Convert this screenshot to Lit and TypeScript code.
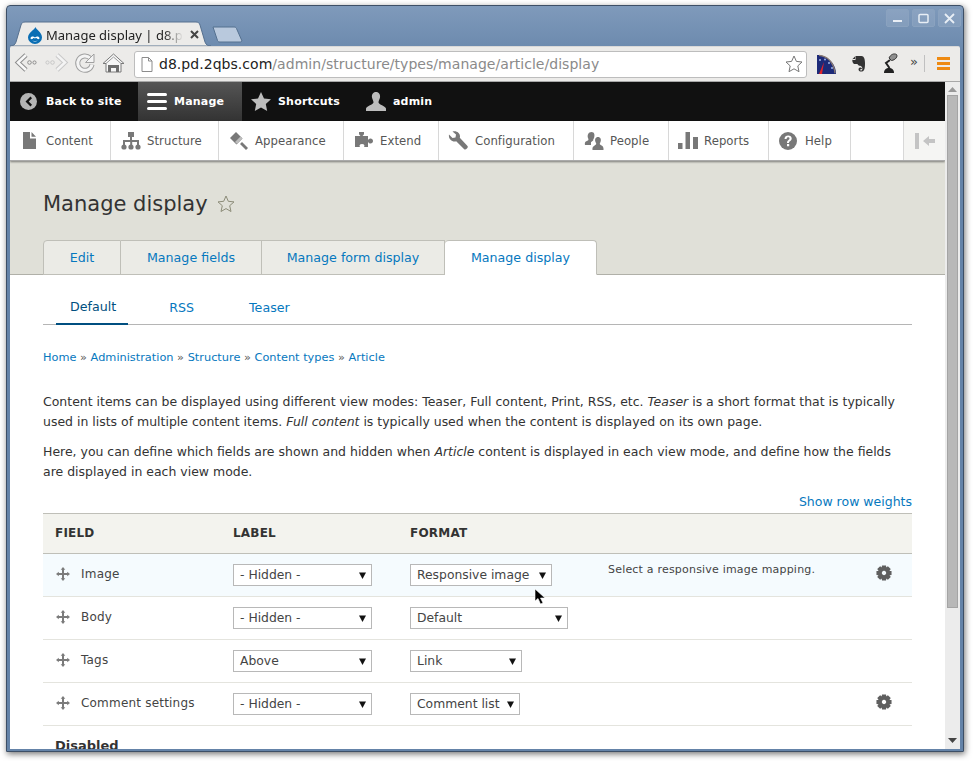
import { LitElement, html, css } from "lit";
import { customElement } from "lit/decorators.js";

const gearPath = (() => {
  const c = 8, teeth = 8, ro = 7.8, ri = 5.8;
  let d = "";
  for (let i = 0; i < teeth; i++) {
    const a = (i / teeth) * Math.PI * 2;
    const w = 0.26, s = 0.42;
    const pts = [[ri, a - s], [ro, a - w], [ro, a + w], [ri, a + s]];
    pts.forEach(([r, t], j) => {
      d += `${i === 0 && j === 0 ? "M" : "L"}${(c + r * Math.cos(t)).toFixed(2)} ${(c + r * Math.sin(t)).toFixed(2)}`;
    });
  }
  return d + "Z M8 5.800a2.200 2.200 0 1 0 .01 0Z";
})();

const gear = () => html`<svg class="gear" width="16" height="16" viewBox="0 0 16 16"><path d=${gearPath} fill="#5f5f5f" fill-rule="evenodd"/></svg>`;
const handle = () => html`<svg class="handle" width="14" height="14" viewBox="0 0 14 14"><path d="M7 0 9.300 2.800H8V6h3.200V4.700L14 7l-2.800 2.300V8H8v3.200h1.300L7 14l-2.300-2.800H6V8H2.800v1.300L0 7l2.800-2.300V6H6V2.800H4.700Z" fill="#7b7b7b"/></svg>`;

const trayIcons: Record<string, any> = {
  content: html`<svg width="15" height="19" viewBox="0 0 15 19"><path d="M1 1h7v6.500h6V18H1Z M9.500 1 14 5.800H9.500Z" fill="#787878"/></svg>`,
  structure: html`<svg width="20" height="20" viewBox="0 0 20 20"><path d="M7 1h6v5h-2v3h7v5h-2v-3h-4.800v3H9.200v-3H4v3H2V9h7V6H7Z" fill="#787878"/><circle cx="3" cy="16" r="2.600" fill="#787878"/><circle cx="10" cy="16" r="2.600" fill="#787878"/><circle cx="17" cy="16" r="2.600" fill="#787878"/></svg>`,
  appearance: html`<svg width="20" height="20" viewBox="0 0 20 20"><path d="M1 7 7 1l6.500 6.500-6 6Z" fill="#787878"/><path d="M6 11l5.500-5.500 2 2-5.500 5.500Z" fill="#bcbcbc"/><path d="M11 13l2-2 6 6-2 2Z" fill="#787878"/></svg>`,
  extend: html`<svg width="20" height="20" viewBox="0 0 20 20"><path d="M1 5h5.500c-1-1-1.500-1.500-1.500-2.500V1h5v1.500c0 1-.5 1.500-1.500 2.500H14v4c1-1 1.500-1.500 2.500-1.500 1.500 0 2.500 1 2.500 2.500s-1 2.500-2.500 2.500c-1 0-1.500-.5-2.500-1.500v5h-4c1-1 .5-3-2-3s-3 2-2 3H1Z" fill="#787878"/></svg>`,
  config: html`<svg width="20" height="20" viewBox="0 0 20 20"><path d="M1 3.500 4.500 7l3-.5.500-3L4.500.5C8-.8 12 1.500 12 5.300c0 .6 0 1-.2 1.400l7.700 8.300c1.300 1.500-1.800 4.500-3.300 3.200l-8-8C4 11.300.2 7.800 1 3.500Z" fill="#787878"/></svg>`,
  people: html`<svg width="20" height="20" viewBox="0 0 20 20"><path d="M7.500 1c3 0 3.500 3 2.500 6-.5 1.200-.8 1.500-.8 2.500-.5.500-1.500 1-2.200 1.800V14H1c-.5-3 .5-3.500 3-4.500.7-.5.5-1.500 0-2.500C3 4 4.500 1 7.500 1Z" fill="#787878"/><path d="M14 6c2.500 0 3.500 2.500 2.500 5-.5 1.200-1 1.500-.5 2.500 1 1 4 1 3.500 5.500H8.500c-.5-4 2.500-4.500 3.500-5.500.5-1 0-1.300-.5-2.500-1-2.500 0-5 2.500-5Z" fill="#787878"/></svg>`,
  reports: html`<svg width="20" height="20" viewBox="0 0 20 20"><path d="M0 12h4.500v6H0ZM7.500 1H12v17H7.500ZM15 6h5v12h-5Z" fill="#787878"/></svg>`,
  help: html`<svg width="18" height="18" viewBox="0 0 18 18"><circle cx="9" cy="9" r="9" fill="#787878"/><path d="M5.500 7c0-2.500 1.800-3.500 3.700-3.500 2 0 3.500 1.200 3.500 3 0 2.500-2.700 2.500-2.700 4.500H8c0-3 2.500-3 2.500-4.500 0-.7-.5-1.200-1.300-1.200-.9 0-1.500.5-1.600 1.700ZM8 12h2.200v2.300H8Z" fill="#fff"/></svg>`,
};

const tray = [
  { k: "content", t: "Content", w: 101, pl: 12, gap: 9 },
  { k: "structure", t: "Structure", w: 108, pl: 10, gap: 6 },
  { k: "appearance", t: "Appearance", w: 125, pl: 10, gap: 6 },
  { k: "extend", t: "Extend", w: 95, pl: 10, gap: 6 },
  { k: "config", t: "Configuration", w: 135, pl: 9, gap: 7 },
  { k: "people", t: "People", w: 95, pl: 10, gap: 6 },
  { k: "reports", t: "Reports", w: 100, pl: 9, gap: 6 },
  { k: "help", t: "Help", w: 82, pl: 10, gap: 8 },
];

const rows = [
  { f: "Image", l: "- Hidden -", o: "Responsive image", w: 142, s: "Select a responsive image mapping.", g: true, hi: true },
  { f: "Body", l: "- Hidden -", o: "Default", w: 158, s: "", g: false, hi: false },
  { f: "Tags", l: "Above", o: "Link", w: 112, s: "", g: false, hi: false },
  { f: "Comment settings", l: "- Hidden -", o: "Comment list", w: 110, s: "", g: true, hi: false },
];

const select = (v: string, w: number) => html`<div class="sel" style="width:${w}px"><span>${v}</span><svg width="7" height="7" viewBox="0 0 7 7"><path d="M0 .5h7L3.500 7Z" fill="#111"/></svg></div>`;

@customElement("app-root")
export class AppRoot extends LitElement {
  static styles = css`
    :host { display: block; width: 974px; height: 761px; background: #fff; position: relative; overflow: hidden; font-family: "DejaVu Sans", sans-serif; color: #333; }
    .win { margin: 5px 0 0 6px; width: 958px; height: 747px; box-sizing: border-box; border: 1px solid #3d4f66; border-radius: 4px 4px 0 0; padding: 0 3px 2px; background: linear-gradient(#7f9abb, #6483a8 60px); box-shadow: 1px 2px 6px rgba(0,0,0,.55); display: flex; flex-direction: column; }
    .strip { height: 40px; flex: none; position: relative; display: flex; }
    .strip svg.tabbg { position: absolute; left: 0; top: 15px; }
    .tabtext { position: absolute; left: 36px; top: 20px; width: 137px; font-family: "Noto Sans", sans-serif; font-size: 13px; line-height: 18px; color: #222; white-space: nowrap; overflow: hidden; -webkit-mask-image: linear-gradient(90deg, #000 118px, transparent 137px); }
    .fav { position: absolute; left: 17px; top: 21px; }
    .tabx { position: absolute; left: 180px; top: 24px; }
    .newtab { position: absolute; left: 202px; top: 20px; }
    .wbtns { position: absolute; right: -1px; top: 3px; display: flex; gap: 3px; }
    .wb { width: 23px; height: 18px; box-sizing: border-box; border: 1px solid #8aa2bf; border-radius: 2px; background: rgba(255,255,255,.1); display: flex; align-items: center; justify-content: center; }
    .toolbar { height: 36px; flex: none; background: #ecebe9; border-top: 1px solid #d8d8d8; box-sizing: border-box; border-bottom: 1px solid #a8a8a8; display: flex; align-items: center; position: relative; border-radius: 2px 2px 0 0; }
    .nav { width: 124px; flex: none; display: flex; align-items: center; }
    .omni { margin-left: 0; width: 673px; height: 27px; flex: none; box-sizing: border-box; border: 1px solid #bdbdbd; border-radius: 3px; background: #fff; display: flex; align-items: center; padding-left: 6px; font-size: 14px; letter-spacing: .04px; color: #222; }
    .omni .url { margin-left: 6px; white-space: nowrap; }
    .omni .url i { font-style: normal; color: #8a8a8a; }
    .omni .bm { margin-left: auto; margin-right: 3px; }
    .exts { display: flex; align-items: center; flex: 1; position: relative; height: 30px; }
    .exts > * { position: absolute; }
    .page { flex: 1; min-height: 0; display: flex; overflow: hidden; background: #fff; }
    .view { width: 935px; flex: none; overflow: hidden; display: flex; flex-direction: column; }
    .sb { width: 15px; flex: none; background: #ececec; display: flex; flex-direction: column; align-items: center; box-sizing: border-box; padding-top: 5px; }
    .thumb { width: 11px; height: 513px; background: #b8b8b8; border: 1px solid #a4a4a4; box-sizing: border-box; margin-top: 3px; }
    .sb .dn { margin-top: auto; margin-bottom: 6px; }
    .bar { height: 39px; flex: none; background: #111; display: flex; color: #fff; font-weight: 700; font-size: 11px; letter-spacing: .2px; }
    .bar a { display: flex; align-items: center; box-sizing: border-box; }
    .bar .back { width: 128px; padding-left: 10px; gap: 9px; }
    .bar .man { width: 104px; padding-left: 9px; gap: 7px; background: linear-gradient(#555, #333); }
    .bar .sh { width: 114px; padding-left: 9px; gap: 7px; }
    .bar .ad { padding-left: 10px; gap: 7px; }
    .tray { height: 40px; flex: none; background: #fff; display: flex; box-shadow: 0 1px 2px rgba(0,0,0,.45); position: relative; border-bottom: 1px solid #aaa; box-sizing: border-box; z-index: 1; }
    .ti { display: flex; align-items: center; box-sizing: border-box; border-right: 1px solid #d8d8d8; font-size: 11.7px; color: #565656; letter-spacing: .05px; }
    .ti svg { flex: none; }
    .tog { margin-left: auto; width: 42px; background: #f5f5f3; border-left: 1px solid #d8d8d8; display: flex; align-items: center; justify-content: center; box-sizing: border-box; }
    .head { height: 114px; flex: none; background: #e0e0d8; box-sizing: border-box; padding: 30px 33px 0; display: flex; flex-direction: column; border-bottom: 1px solid #b0b0a8; }
    h1 { margin: 0; font-size: 21px; font-weight: 400; line-height: 26px; color: #333; display: flex; align-items: center; gap: 9px; }
    .tabs { display: flex; margin-top: auto; height: 35px; margin-bottom: -1px; }
    .tab { box-sizing: border-box; height: 35px; border: 1px solid #bfbfb8; border-left-width: 0; background: #ebebe6; font-size: 12.65px; color: #0678be; display: flex; align-items: center; justify-content: center; }
    .tab:first-child { border-left-width: 1px; border-radius: 4px 0 0 0; }
    .tab.on { background: #fff; border-bottom-color: #fff; border-radius: 4px 4px 0 0; }
    .main { padding: 0 33px; flex: 1; }
    .sec { height: 50px; display: flex; border-bottom: 1px solid #b5b5b5; box-sizing: border-box; align-items: stretch; }
    .sec a { font-size: 12.65px; color: #0678be; display: flex; align-items: center; box-sizing: border-box; height: 50px; padding-top: 14px; }
    .sec a.on { color: #004f80; border-bottom: 2px solid #004f80; padding: 14px 12px 0 14px; margin-left: 13px; }
    .sec a.r { margin-left: 41px; }
    .sec a.t { margin-left: 55px; }
    .crumb { font-size: 11.33px; line-height: 14px; margin-top: 25px; color: #555; }
    .crumb a { color: #0678be; }
    p { margin: 0; font-size: 12.47px; line-height: 20px; color: #333; }
    .p1 { margin-top: 28px; }
    .p2 { margin-top: 10px; }
    .weights { text-align: right; font-size: 12.5px; line-height: 18px; color: #0678be; margin-top: 11px; margin-bottom: 2px; }
    .hd, .row { display: grid; grid-template-columns: 178px 177px 198px 268px 48px; }
    .hd { height: 41px; background: #f3f3ee; border-top: 1px solid #bfbfb8; border-bottom: 1px solid #bfbfb8; box-sizing: border-box; font-size: 12px; font-weight: 700; color: #333; align-items: center; letter-spacing: .2px; padding-bottom: 2px; }
    .hd > div { padding-left: 12px; }
    .row { height: 43px; box-sizing: border-box; border-bottom: 1px solid #e4e4de; }
    .row.hi { background: #f5fbfe; }
    .row > div { padding-left: 12px; display: flex; align-items: center; }
    .row > .fld { font-size: 12px; color: #444; gap: 11px; letter-spacing: .2px; padding: 0 0 3px 13px; }
    .sel { height: 22px; box-sizing: border-box; border: 1px solid #b8b8b8; background: #fff; font-size: 12.35px; color: #444; display: flex; align-items: center; justify-content: space-between; padding: 0 5px 0 6px; white-space: nowrap; }
    .row > .sum { font-size: 11px; color: #444; align-items: flex-start; padding-top: 9px; letter-spacing: .2px; }
    .gc { padding-bottom: 4px; padding-left: 12px; }
    .dis { font-size: 13px; font-weight: 700; color: #333; padding: 12px 12px 0; line-height: 16px; }
    .cursor { position: absolute; left: 534px; top: 589px; }
  `;

  render() {
    return html`
      <div class="win">
        <div class="strip">
          <svg class="tabbg" width="205" height="25" viewBox="0 0 205 25"><path d="M0 25c3 0 5-1 6-4l5-17c.5-2 2-3 4-3h171c2 0 3.500 1 4 3l5 17c1 3 3 4 6 4Z" fill="#ecebe9" stroke="#56708f"/></svg>
          <svg class="fav" width="16" height="17" viewBox="0 0 16 17"><path d="M8.500 0c.5 2.500 6.500 5 6.500 10.500A7 6.500 0 0 1 1 10.500C1 5.500 7.500 3 8.500 0Z" fill="#0a6eb4"/><path d="M3.500 11c1-1.800 3-1.800 4.500-.5 1.500-1.300 3.500-1.300 4.500.5-.2 1.500-1.500 1.500-2.500.5-1-.8-1.500-.5-2 0-.8-.5-1.300-.8-2 0-1 1-2.300 1-2.500-.5Z" fill="#fff"/><path d="M5.500 13.500c1.500 1 3.500 1 5 0-1 1.500-4 1.500-5 0Z" fill="#fff"/></svg>
          <div class="tabtext">Manage display | d8.pd.2qbs.com</div>
          <svg class="tabx" width="9" height="9" viewBox="0 0 9 9"><path d="M1 1l7 7M8 1 1 8" stroke="#444" stroke-width="2"/></svg>
          <svg class="newtab" width="31" height="17" viewBox="0 0 31 17"><path d="M1 1h21c1.500 0 2 .5 2.500 1.500L30 15c-1 1-1.500 1-3 1H8c-1.500 0-2-.5-2.500-1.500Z" fill="#b9c9dd" stroke="#54708f" stroke-width="1"/></svg>
          <div class="wbtns">
            <div class="wb"><svg width="11" height="11" viewBox="0 0 11 11"><path d="M1 7h9v2H1Z" fill="#e8eef5"/></svg></div>
            <div class="wb"><svg width="11" height="11" viewBox="0 0 11 11"><rect x="1" y="1.500" width="9" height="8" rx="1" fill="none" stroke="#e8eef5" stroke-width="1.500"/></svg></div>
            <div class="wb"><svg width="11" height="11" viewBox="0 0 11 11"><path d="M1 1l9 9M10 1l-9 9" stroke="#e8eef5" stroke-width="1.800"/></svg></div>
          </div>
        </div>
        <div class="toolbar">
          <div class="nav">
            <svg width="124" height="24" viewBox="0 0 124 24">
              <path d="M16 3 8 10.500l8 7.500" fill="none" stroke="#8d8d8d" stroke-width="4.500" stroke-linejoin="miter"/>
              <path d="M16 3 8 10.500l8 7.500" fill="none" stroke="#f8f8f8" stroke-width="2.500"/>
              <circle cx="19.500" cy="10.500" r="1.800" fill="none" stroke="#8d8d8d"/><circle cx="24.500" cy="10.500" r="1.600" fill="none" stroke="#8d8d8d"/>
              <circle cx="37.500" cy="10.500" r="1.600" fill="none" stroke="#c8c8c8"/><circle cx="42.500" cy="10.500" r="1.800" fill="none" stroke="#c8c8c8"/>
              <path d="M47 3l8 7.500L47 18" fill="none" stroke="#c8c8c8" stroke-width="4.500"/>
              <path d="M47 3l8 7.500L47 18" fill="none" stroke="#f4f4f4" stroke-width="2.500"/>
              <path d="M80 6a7.200 7.200 0 1 0 2 6.500" fill="none" stroke="#a0a0a0" stroke-width="5"/>
              <path d="M80 6a7.200 7.200 0 1 0 2 6.500" fill="none" stroke="#f4f4f4" stroke-width="3"/>
              <path d="M84 2v8.500h-8.500Z" fill="#f4f4f4" stroke="#a0a0a0"/>
              <path d="M93 11.500 103.500 2 114 11.500h-3V20H96v-8.500Z" fill="#f7f7f7" stroke="#7a7a7a"/>
              <path d="M96 11.500l7.500-6.500 7.500 6.500" fill="none" stroke="#9a9a9a"/>
              <path d="M98 20v-7h11v7h-3v-4h-5v4Z" fill="#6e6e6e"/>
            </svg>
          </div>
          <div class="omni">
            <svg width="12" height="15" viewBox="0 0 12 15"><path d="M1 .5h6.500L11 4v10.500H1Z M7.500 .5V4H11" fill="#fff" stroke="#8c8c8c"/></svg>
            <span class="url">d8.pd.2qbs.com<i>/admin/structure/types/manage/article/display</i></span>
            <svg class="bm" width="18" height="18" viewBox="0 0 18 18"><path d="M9 1l2.400 5.400 5.600.6-4.200 3.900 1.200 5.800L9 13.800 4 16.700l1.200-5.800L1 7l5.600-.6Z" fill="#fff" stroke="#777"/></svg>
          </div>
          <div class="exts">
            <svg style="left:10px;top:5px" width="20" height="20" viewBox="0 0 20 20"><path d="M0 1c10 0 19 8 19 19H0Z" fill="#1d2a78"/><path d="M2 1.300c8 .5 15 7 16 18" fill="none" stroke="#8a7a70" stroke-width="1.300"/><path d="M2 20 7 8 5 20Z" fill="#e0222a"/><circle cx="3" cy="6" r="1" fill="#9fb4e6"/><circle cx="8" cy="5.500" r="1" fill="#9fb4e6"/><circle cx="12" cy="9" r="1" fill="#9fb4e6"/><circle cx="15" cy="14" r="1" fill="#9fb4e6"/></svg>
            <svg style="left:45px;top:6px" width="14" height="18" viewBox="0 0 14 18"><path d="M0 4.500 3 1.500V4H1ZM3.500 1h6c2.500 0 3.500 3 3.500 7 0 3.500 0 8-3 8.500-2 .3-3.500-.5-3.500-2.300 0-1.200 1-1.700 2-1.700 1.200 0 1.500 1 1.500 1.800-.8-.3-1.800-.3-1.800.4 0 .7.700.9 1.300.8 1.300-.2 1-2.700.3-3.700-1-1.300-3.500-.7-4.300-2.800H2C.5 8 .3 6 .3 5H3.500Z" fill="#333"/></svg>
            <svg style="left:76px;top:4px" width="15" height="21" viewBox="0 0 15 21"><path d="M6 5c1.500-3.500 5-5 7.500-3.500 1.500 2-1 5.500-5 6Z" fill="#8f8f8f" stroke="#333"/><path d="M7 7 3 10l3.500 5" fill="none" stroke="#222" stroke-width="2"/><path d="M1 20c0-3.500 2-5 5-5s5 1.500 5 5Z" fill="#222"/></svg>
            <span style="left:103px;top:5px;font-size:13px;color:#444">»</span>
            <div style="left:117px;top:6px;width:1px;height:17px;background:#c0c0c0"></div>
            <svg style="left:130px;top:8px" width="13" height="13" viewBox="0 0 13 13"><path d="M0 0h13v3H0ZM0 5h13v3H0ZM0 10h13v3H0Z" fill="#ee8a12"/></svg>
          </div>
        </div>
        <div class="page">
          <div class="view">
            <div class="bar">
              <a class="back"><svg width="17" height="17" viewBox="0 0 17 17"><circle cx="8.500" cy="8.500" r="8.500" fill="#b5b5b5"/><path d="M10.500 3.500 5.500 8.500l5 5 1.500-1.700-3.300-3.300L12 5.200Z" fill="#111"/></svg>Back to site</a>
              <a class="man"><svg width="20" height="17" viewBox="0 0 20 17"><path d="M1.500 0h17a1.500 1.500 0 0 1 0 3h-17a1.500 1.500 0 0 1 0-3ZM1.500 7h17a1.500 1.500 0 0 1 0 3h-17a1.500 1.500 0 0 1 0-3ZM1.500 14h17a1.500 1.500 0 0 1 0 3h-17a1.500 1.500 0 0 1 0-3Z" fill="#fff"/></svg>Manage</a>
              <a class="sh"><svg width="20" height="19" viewBox="0 0 20 19"><path d="M10 0l3 6.500 7 .8-5.200 4.700 1.400 7L10 15.500 3.800 19l1.400-7L0 7.300l7-.8Z" fill="#bdbdbd"/></svg>Shortcuts</a>
              <a class="ad"><svg width="20" height="19" viewBox="0 0 20 19"><path d="M10 0c3 0 4.500 2.500 4 5.500-.3 2-1.500 3-1.500 5 .5 2.500 6.500 3 7.500 6V19H0v-2.500c1-3 7-3.500 7.500-6 0-2-1.200-3-1.500-5C5.500 2.500 7 0 10 0Z" fill="#bdbdbd"/></svg>admin</a>
            </div>
            <div class="tray">
              ${tray.map(i => html`<a class="ti" style="width:${i.w}px;padding-left:${i.pl}px;gap:${i.gap}px">${trayIcons[i.k]}${i.t}</a>`)}
              <div class="tog"><svg width="20" height="16" viewBox="0 0 20 16"><path d="M0 0h4v16H0ZM8 8l6-5v3h6v4h-6v3Z" fill="#c4c4c4"/></svg></div>
            </div>
            <div class="head">
              <h1>Manage display <svg width="18" height="18" viewBox="0 0 18 18"><path d="M9 1l2.300 5.300 5.700.6-4.300 3.800 1.300 5.800L9 13.600 4 16.500l1.300-5.800L1 6.900l5.700-.6Z" fill="none" stroke="#8c8c78"/></svg></h1>
              <div class="tabs">
                <a class="tab" style="width:78px">Edit</a>
                <a class="tab" style="width:141px">Manage fields</a>
                <a class="tab" style="width:183px">Manage form display</a>
                <a class="tab on" style="width:152px">Manage display</a>
              </div>
            </div>
            <div class="main">
              <div class="sec"><a class="on">Default</a><a class="r">RSS</a><a class="t">Teaser</a></div>
              <div class="crumb"><a>Home</a> » <a>Administration</a> » <a>Structure</a> » <a>Content types</a> » <a>Article</a></div>
              <p class="p1">Content items can be displayed using different view modes: Teaser, Full content, Print, RSS, etc. <em>Teaser</em> is a short format that is typically used in lists of multiple content items. <em>Full content</em> is typically used when the content is displayed on its own page.</p>
              <p class="p2">Here, you can define which fields are shown and hidden when <em>Article</em> content is displayed in each view mode, and define how the fields are displayed in each view mode.</p>
              <div class="weights">Show row weights</div>
              <div class="hd"><div>FIELD</div><div>LABEL</div><div>FORMAT</div><div></div><div></div></div>
              ${rows.map(r => html`<div class="row ${r.hi ? "hi" : ""}">
                <div class="fld">${handle()}${r.f}</div>
                <div>${select(r.l, 139)}</div>
                <div>${select(r.o, r.w)}</div>
                <div class="sum">${r.s}</div>
                <div class="gc">${r.g ? gear() : ""}</div>
              </div>`)}
              <div class="dis">Disabled</div>
            </div>
          </div>
          <div class="sb">
            <svg width="9" height="5" viewBox="0 0 9 5"><path d="M0 5 4.500 0 9 5Z" fill="#999"/></svg>
            <div class="thumb"></div>
            <svg class="dn" width="9" height="5" viewBox="0 0 9 5"><path d="M0 0 4.500 5 9 0Z" fill="#444"/></svg>
          </div>
        </div>
      </div>
      <svg class="cursor" width="12" height="16" viewBox="0 0 12 16"><path d="M1 0v12l3-2.500L6.500 15l2.500-1-2.500-5H11Z" fill="#000" stroke="#fff" stroke-width=".6"/></svg>
    `;
  }
}
